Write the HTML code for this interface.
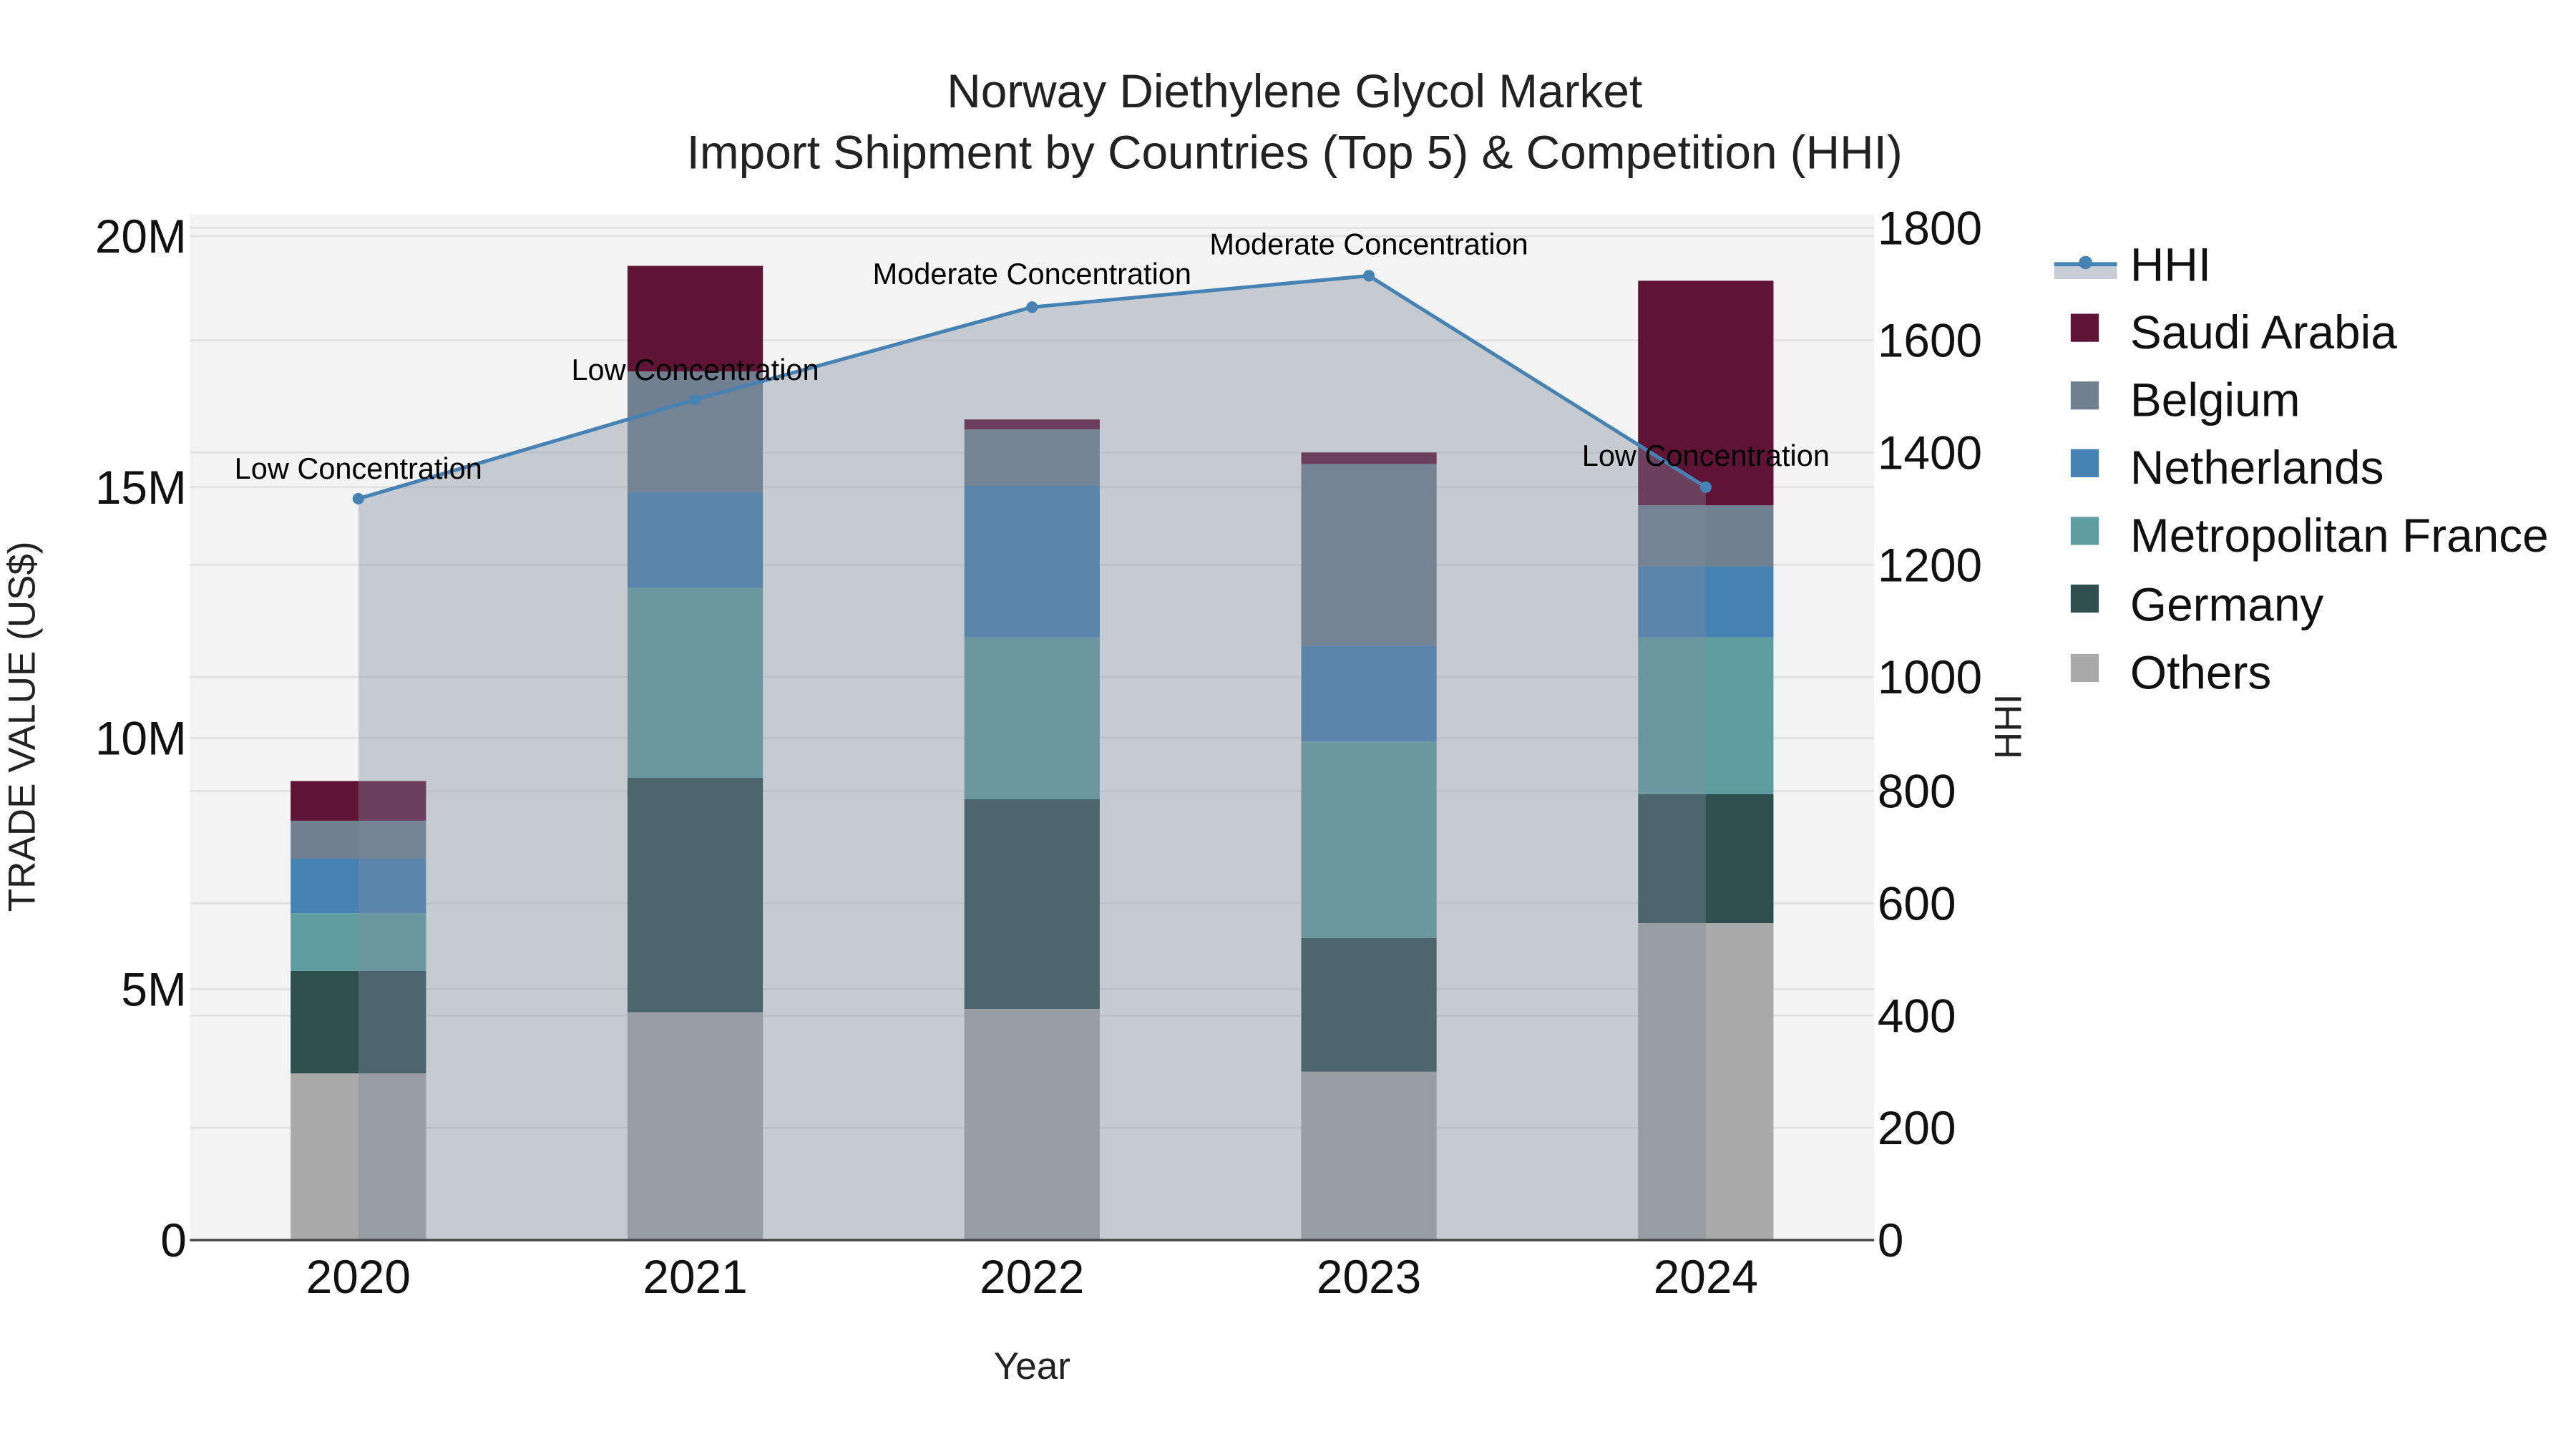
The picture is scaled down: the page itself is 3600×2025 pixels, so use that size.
<!DOCTYPE html>
<html><head><meta charset="utf-8"><style>
html,body{margin:0;padding:0;background:#fff;}
svg{display:block;}
text{font-family:"Liberation Sans",sans-serif;}
</style></head><body>
<svg width="3600" height="2025" viewBox="0 0 1560 877.5" xmlns="http://www.w3.org/2000/svg">
<rect x="0" y="0" width="1560" height="877.5" fill="#fff"/>
<rect x="115" y="130" width="1020" height="621" fill="#f3f3f3"/>
<g stroke="#e2e2e2" stroke-width="1.2">
<line x1="115" x2="1135" y1="599" y2="599"/><line x1="115" x2="1135" y1="447" y2="447"/>
<line x1="115" x2="1135" y1="295" y2="295"/><line x1="115" x2="1135" y1="143" y2="143"/>
<line x1="115" x2="1135" y1="683" y2="683"/><line x1="115" x2="1135" y1="615" y2="615"/>
<line x1="115" x2="1135" y1="547" y2="547"/><line x1="115" x2="1135" y1="479" y2="479"/>
<line x1="115" x2="1135" y1="410" y2="410"/><line x1="115" x2="1135" y1="342" y2="342"/>
<line x1="115" x2="1135" y1="274" y2="274"/><line x1="115" x2="1135" y1="206" y2="206"/>
<line x1="115" x2="1135" y1="138" y2="138"/>
</g>
<g>
<rect x="176" y="650" width="82" height="101" fill="#a9a9a9"/>
<rect x="176" y="588" width="82" height="62" fill="#2f4f4f"/>
<rect x="176" y="553" width="82" height="35" fill="#5f9ea0"/>
<rect x="176" y="520" width="82" height="33" fill="#4682b4"/>
<rect x="176" y="497" width="82" height="23" fill="#708090"/>
<rect x="176" y="473" width="82" height="24" fill="#5f1335"/>

<rect x="380" y="613" width="82" height="138" fill="#a9a9a9"/>
<rect x="380" y="471" width="82" height="142" fill="#2f4f4f"/>
<rect x="380" y="356" width="82" height="115" fill="#5f9ea0"/>
<rect x="380" y="298" width="82" height="58" fill="#4682b4"/>
<rect x="380" y="225" width="82" height="73" fill="#708090"/>
<rect x="380" y="161" width="82" height="64" fill="#5f1335"/>

<rect x="584" y="611" width="82" height="140" fill="#a9a9a9"/>
<rect x="584" y="484" width="82" height="127" fill="#2f4f4f"/>
<rect x="584" y="386" width="82" height="98" fill="#5f9ea0"/>
<rect x="584" y="294" width="82" height="92" fill="#4682b4"/>
<rect x="584" y="260" width="82" height="34" fill="#708090"/>
<rect x="584" y="254" width="82" height="6" fill="#5f1335"/>

<rect x="788" y="649" width="82" height="102" fill="#a9a9a9"/>
<rect x="788" y="568" width="82" height="81" fill="#2f4f4f"/>
<rect x="788" y="449" width="82" height="119" fill="#5f9ea0"/>
<rect x="788" y="391" width="82" height="58" fill="#4682b4"/>
<rect x="788" y="281" width="82" height="110" fill="#708090"/>
<rect x="788" y="274" width="82" height="7" fill="#5f1335"/>

<rect x="992" y="559" width="82" height="192" fill="#a9a9a9"/>
<rect x="992" y="481" width="82" height="78" fill="#2f4f4f"/>
<rect x="992" y="386" width="82" height="95" fill="#5f9ea0"/>
<rect x="992" y="343" width="82" height="43" fill="#4682b4"/>
<rect x="992" y="306" width="82" height="37" fill="#708090"/>
<rect x="992" y="170" width="82" height="136" fill="#5f1335"/>
</g>
<polygon points="217,751 217,302 421,242 625,186 829,167 1033,295 1033,751" fill="rgb(127,140,158)" fill-opacity="0.38"/>
<polyline points="217,302 421,242 625,186 829,167 1033,295" fill="none" stroke="#4682b4" stroke-width="2.2"/>
<g fill="#4682b4"><circle cx="217" cy="302" r="3.5"/><circle cx="421" cy="242" r="3.5"/><circle cx="625" cy="186" r="3.5"/><circle cx="829" cy="167" r="3.5"/><circle cx="1033" cy="295" r="3.5"/></g>
<line x1="115" x2="1135" y1="751" y2="751" stroke="#444" stroke-width="1.5"/>
<g font-size="18" text-anchor="middle" fill="#000">
<text x="217" y="290">Low Concentration</text>
<text x="421" y="230">Low Concentration</text>
<text x="625" y="172">Moderate Concentration</text>
<text x="829" y="154">Moderate Concentration</text>
<text x="1033" y="282">Low Concentration</text>
</g>
<g font-size="28.5" fill="#111" text-anchor="end">
<text x="113" y="761">0</text><text x="113" y="609">5M</text><text x="113" y="457">10M</text><text x="113" y="305">15M</text><text x="113" y="153">20M</text>
</g>
<g font-size="28.5" fill="#111" text-anchor="start">
<text x="1137" y="761">0</text><text x="1137" y="693">200</text><text x="1137" y="625">400</text><text x="1137" y="557">600</text><text x="1137" y="489">800</text><text x="1137" y="420">1000</text><text x="1137" y="352">1200</text><text x="1137" y="284">1400</text><text x="1137" y="216">1600</text><text x="1137" y="148">1800</text>
</g>
<g font-size="28.5" fill="#111" text-anchor="middle">
<text x="217" y="783">2020</text><text x="421" y="783">2021</text><text x="625" y="783">2022</text><text x="829" y="783">2023</text><text x="1033" y="783">2024</text>
</g>
<text x="625" y="835" font-size="23" text-anchor="middle" fill="#222">Year</text>
<text transform="translate(21,440) rotate(-90)" font-size="23" text-anchor="middle" fill="#222">TRADE VALUE (US$)</text>
<text transform="translate(1224,440) rotate(-90)" font-size="23" text-anchor="middle" fill="#222">HHI</text>
<g font-size="28.5" text-anchor="middle" fill="#222">
<text x="784" y="65">Norway Diethylene Glycol Market</text>
<text x="784" y="102">Import Shipment by Countries (Top 5) &amp; Competition (HHI)</text>
</g>
<rect x="1244" y="160" width="38" height="9" fill="#c8ccd4"/>
<line x1="1244" x2="1282" y1="160" y2="160" stroke="#4682b4" stroke-width="2.5"/>
<circle cx="1263" cy="159" r="4" fill="#4682b4"/>
<rect x="1254" y="190" width="17" height="17" fill="#5f1335"/>
<rect x="1254" y="231" width="17" height="17" fill="#708090"/>
<rect x="1254" y="272" width="17" height="17" fill="#4682b4"/>
<rect x="1254" y="313" width="17" height="17" fill="#5f9ea0"/>
<rect x="1254" y="354" width="17" height="17" fill="#2f4f4f"/>
<rect x="1254" y="396" width="17" height="17" fill="#a9a9a9"/>
<g font-size="28.5" fill="#111">
<text x="1290" y="170">HHI</text>
<text x="1290" y="211">Saudi Arabia</text>
<text x="1290" y="252">Belgium</text>
<text x="1290" y="293">Netherlands</text>
<text x="1290" y="334">Metropolitan France</text>
<text x="1290" y="376">Germany</text>
<text x="1290" y="417">Others</text>
</g>
</svg>
</body></html>
